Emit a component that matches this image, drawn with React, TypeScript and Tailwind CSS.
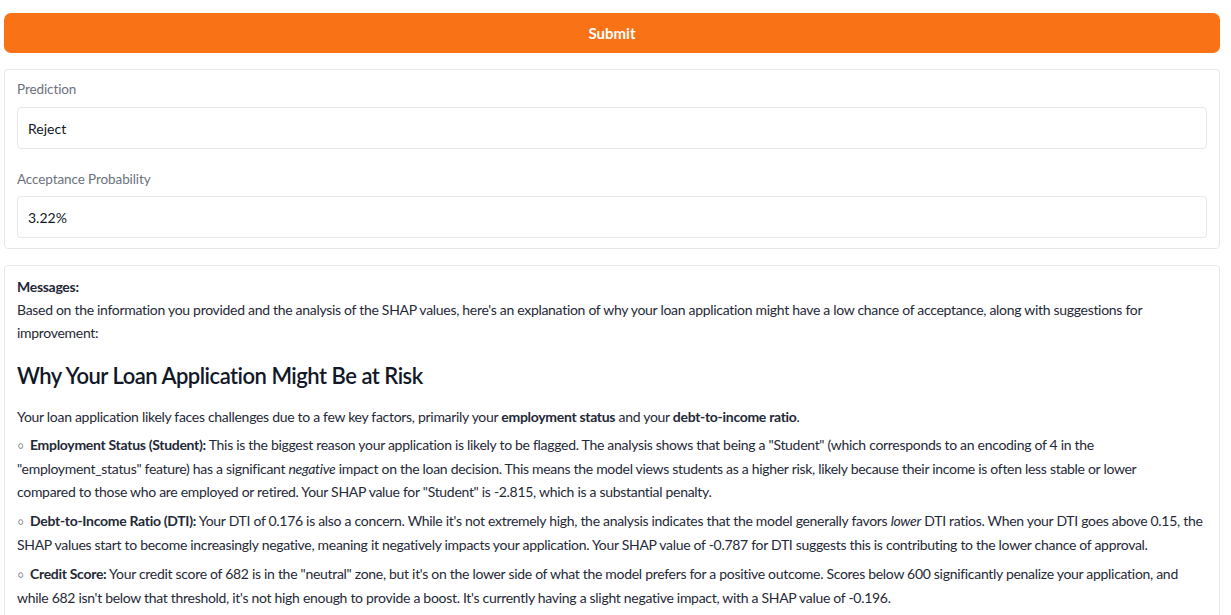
import React from "react";

function Bullet() {
  return <span className="inline-block w-[13px] pl-[1px] text-[9px] align-[1px] tracking-normal text-[#6b7280]">○</span>;
}

export default function App() {
  return (
    <div className="min-h-screen bg-white text-[#1f2937] font-['Lato','Noto_Sans',sans-serif] text-[14px]">
      <div className="pl-[4px] pr-[11px] pt-[13px]">
        <button className="w-full h-[40px] rounded-[7px] bg-[#f97316] text-white font-bold text-[15px]">
          Submit
        </button>

        <div className="mt-[16px] border border-[#e5e7eb] rounded-[4px] px-[12px] pt-[10px] pb-[10px]">
          <div className="text-[#6b7280] text-[13.5px] leading-[18px] tracking-[-0.1px]">Prediction</div>
          <div className="mt-[9px] h-[42px] border border-[#e5e7eb] rounded-[4px] flex items-center px-[10px] text-[#111827]">
            Reject
          </div>
          <div className="mt-[21px] text-[#6b7280] text-[13.5px] leading-[18px] tracking-[-0.1px]">Acceptance Probability</div>
          <div className="mt-[8px] h-[42px] border border-[#e5e7eb] rounded-[4px] flex items-center px-[10px] text-[#111827]">
            3.22%
          </div>
        </div>

        <div className="mt-[16px] border border-[#e5e7eb] rounded-[4px] px-[12px] pt-[9px] pb-[20px] leading-[23px] tracking-[-0.3px]">
          <div className="font-bold">Messages:</div>
          <p>
            Based on the information you provided and the analysis of the SHAP values, here's an explanation of why your loan application might have a low chance of acceptance, along with suggestions for improvement:
          </p>
          <h2 className="mt-[17px] mb-[14px] text-[22px] font-semibold leading-[30px] text-[#111827] tracking-[-0.5px]">
            Why Your Loan Application Might Be at Risk
          </h2>
          <p>
            Your loan application likely faces challenges due to a few key factors, primarily your <b>employment status</b> and your <b>debt-to-income ratio</b>.
          </p>
          <ul className="mt-[5px] flex flex-col gap-[6px]">
            <li>
              <Bullet />
              <b>Employment Status (Student):</b> This is the biggest reason your application is likely to be flagged. The analysis shows that being a "Student" (which corresponds to an encoding of 4 in the "employment_status" feature) has a significant <i>negative</i> impact on the loan decision. This means the model views students as a higher risk, likely because their income is often less stable or lower
              <br />
              compared to those who are employed or retired. Your SHAP value for "Student" is -2.815, which is a substantial penalty.
            </li>
            <li>
              <Bullet />
              <b>Debt-to-Income Ratio (DTI):</b> Your DTI of 0.176 is also a concern. While it's not extremely high, the analysis indicates that the model generally favors <i>lower</i> DTI ratios. When your DTI goes above 0.15, the SHAP values start to become increasingly negative, meaning it negatively impacts your application. Your SHAP value of -0.787 for DTI suggests this is contributing to the lower chance of approval.
            </li>
            <li>
              <Bullet />
              <b>Credit Score:</b> Your credit score of 682 is in the "neutral" zone, but it's on the lower side of what the model prefers for a positive outcome. Scores below 600 significantly penalize your application, and while 682 isn't below that threshold, it's not high enough to provide a boost. It's currently having a slight negative impact, with a SHAP value of -0.196.
            </li>
          </ul>
        </div>
      </div>
    </div>
  );
}
